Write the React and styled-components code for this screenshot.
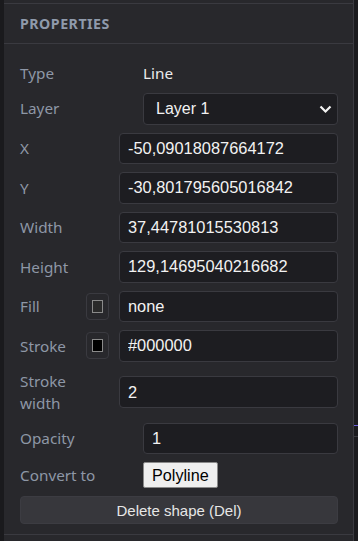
import styled, { createGlobalStyle } from "styled-components";

const GlobalStyle = createGlobalStyle`
  html, body {
    margin: 0;
    padding: 0;
    background: #1b1b1e;
  }
  * {
    box-sizing: border-box;
  }
`;

const Layout = styled.div`
  display: flex;
  height: 100vh;
  overflow: hidden;
  background: #1b1b1e;
`;

const Gutter = styled.div`
  width: 4px;
  flex: none;
  background: #1a1a1d;
`;

const Panel = styled.aside`
  width: 350px;
  flex: none;
  display: flex;
  flex-direction: column;
  background: #28282c;
  border-right: 1px solid #3a3a40;
`;

const PrevSection = styled.div`
  height: 4px;
  flex: none;
  border-bottom: 1px solid #3a3a40;
`;

const Header = styled.h2`
  margin: 0;
  height: 40px;
  flex: none;
  display: flex;
  align-items: center;
  padding: 0 16px;
  border-bottom: 1px solid #3a3a40;
  font-family: "Noto Sans", "Liberation Sans", sans-serif;
  font-weight: 700;
  font-size: 14.2px;
  letter-spacing: 0.5px;
  color: #8f9aab;
  text-transform: uppercase;
`;

const Body = styled.div`
  display: flex;
  flex-direction: column;
  gap: 8px;
  padding: 18px 15px 10px 16px;
  border-bottom: 1px solid #3a3a40;
`;

const Row = styled.div`
  display: flex;
  align-items: center;
  gap: 10px;
  min-height: ${(p) => p.$min || 0}px;
`;

const Label = styled.span`
  width: ${(p) => p.$w}px;
  flex: none;
  font-family: "Noto Sans", "Liberation Sans", sans-serif;
  font-size: 15.3px;
  line-height: 22.5px;
  color: #8e97a6;
`;

const Value = styled.span`
  font-family: "Noto Sans", "Liberation Sans", sans-serif;
  font-size: 15.3px;
  line-height: 22px;
  color: #ececec;
`;

const Field = styled.input`
  flex: 1;
  min-width: 0;
  height: 31.5px;
  padding: 0 8px;
  background: #1d1d21;
  border: 1px solid #3a3a40;
  border-radius: 4px;
  color: #f2f2f2;
  font-family: "Liberation Sans", Arial, sans-serif;
  font-size: 16.4px;
  outline: none;
`;

const SelectWrap = styled.div`
  position: relative;
  flex: 1;
  display: flex;
`;

const Select = styled.select`
  flex: 1;
  height: 32px;
  padding: 0 30px 0 12px;
  appearance: none;
  background: #1d1d21;
  border: 1px solid #3a3a40;
  border-radius: 4px;
  color: #f2f2f2;
  font-family: "Liberation Sans", Arial, sans-serif;
  font-size: 16px;
  outline: none;
`;

const Chevron = styled.svg`
  position: absolute;
  right: 4px;
  top: 12px;
  pointer-events: none;
`;

const Swatch = styled.button`
  width: 23px;
  height: 27px;
  flex: none;
  padding: 0;
  display: flex;
  align-items: center;
  justify-content: center;
  background: #28282c;
  border: 1px solid #3a3a40;
  border-radius: 4px;

  span {
    width: 11px;
    height: 13px;
    border: 1px solid #8a8a8a;
    background: ${(p) => p.$color};
  }
`;

const ConvertButton = styled.button`
  height: 26px;
  padding: 0 8px;
  background: #efefef;
  border: 1px solid #8a8a8a;
  border-radius: 2px;
  color: #000;
  font-family: "Liberation Sans", Arial, sans-serif;
  font-size: 16.2px;
`;

const DeleteButton = styled.button`
  height: 28px;
  width: 100%;
  background: #37373c;
  border: 1px solid #3c3c42;
  border-radius: 4px;
  color: #e6e6e6;
  font-family: "Liberation Sans", Arial, sans-serif;
  font-size: 15px;
`;

const Canvas = styled.main`
  flex: 1;
  position: relative;
  background: #1b1b1e;
`;

const CanvasMark = styled.div`
  position: absolute;
  left: 0;
  right: 0;
  top: ${(p) => p.$top}px;
  height: 1px;
  background: ${(p) => p.$color};
`;

const numericRows = [
  ["X", "-50,09018087664172"],
  ["Y", "-30,801795605016842"],
  ["Width", "37,44781015530813"],
  ["Height", "129,14695040216682"],
];

export default function App() {
  return (
    <>
      <GlobalStyle />
      <Layout>
        <Gutter />
        <Panel>
          <PrevSection />
          <Header>Properties</Header>
          <Body>
            <Row>
              <Label $w={113}>Type</Label>
              <Value>Line</Value>
            </Row>
            <Row>
              <Label $w={113}>Layer</Label>
              <SelectWrap>
                <Select defaultValue="layer1">
                  <option value="layer1">Layer 1</option>
                </Select>
                <Chevron width="16" height="9" viewBox="0 0 16 9">
                  <polyline
                    points="2.5,1.5 7.5,6.5 12.5,1.5"
                    fill="none"
                    stroke="#f2f2f2"
                    strokeWidth="2.2"
                  />
                </Chevron>
              </SelectWrap>
            </Row>
            {numericRows.map(([label, value]) => (
              <Row key={label}>
                <Label $w={89}>{label}</Label>
                <Field defaultValue={value} />
              </Row>
            ))}
            <Row>
              <Label $w={56}>Fill</Label>
              <Swatch $color="#2a2a2a">
                <span />
              </Swatch>
              <Field defaultValue="none" />
            </Row>
            <Row>
              <Label $w={56}>Stroke</Label>
              <Swatch $color="#000000">
                <span />
              </Swatch>
              <Field defaultValue="#000000" />
            </Row>
            <Row $min={45}>
              <Label $w={89}>
                Stroke
                <br />
                width
              </Label>
              <Field defaultValue="2" />
            </Row>
            <Row>
              <Label $w={113}>Opacity</Label>
              <Field defaultValue="1" />
            </Row>
            <Row>
              <Label $w={113}>Convert to</Label>
              <ConvertButton>Polyline</ConvertButton>
            </Row>
            <DeleteButton>Delete shape (Del)</DeleteButton>
          </Body>
        </Panel>
        <Canvas>
          <CanvasMark $top={425} $color="#6b5fd6" />
          <CanvasMark $top={436} $color="#3a3a40" />
        </Canvas>
      </Layout>
    </>
  );
}
